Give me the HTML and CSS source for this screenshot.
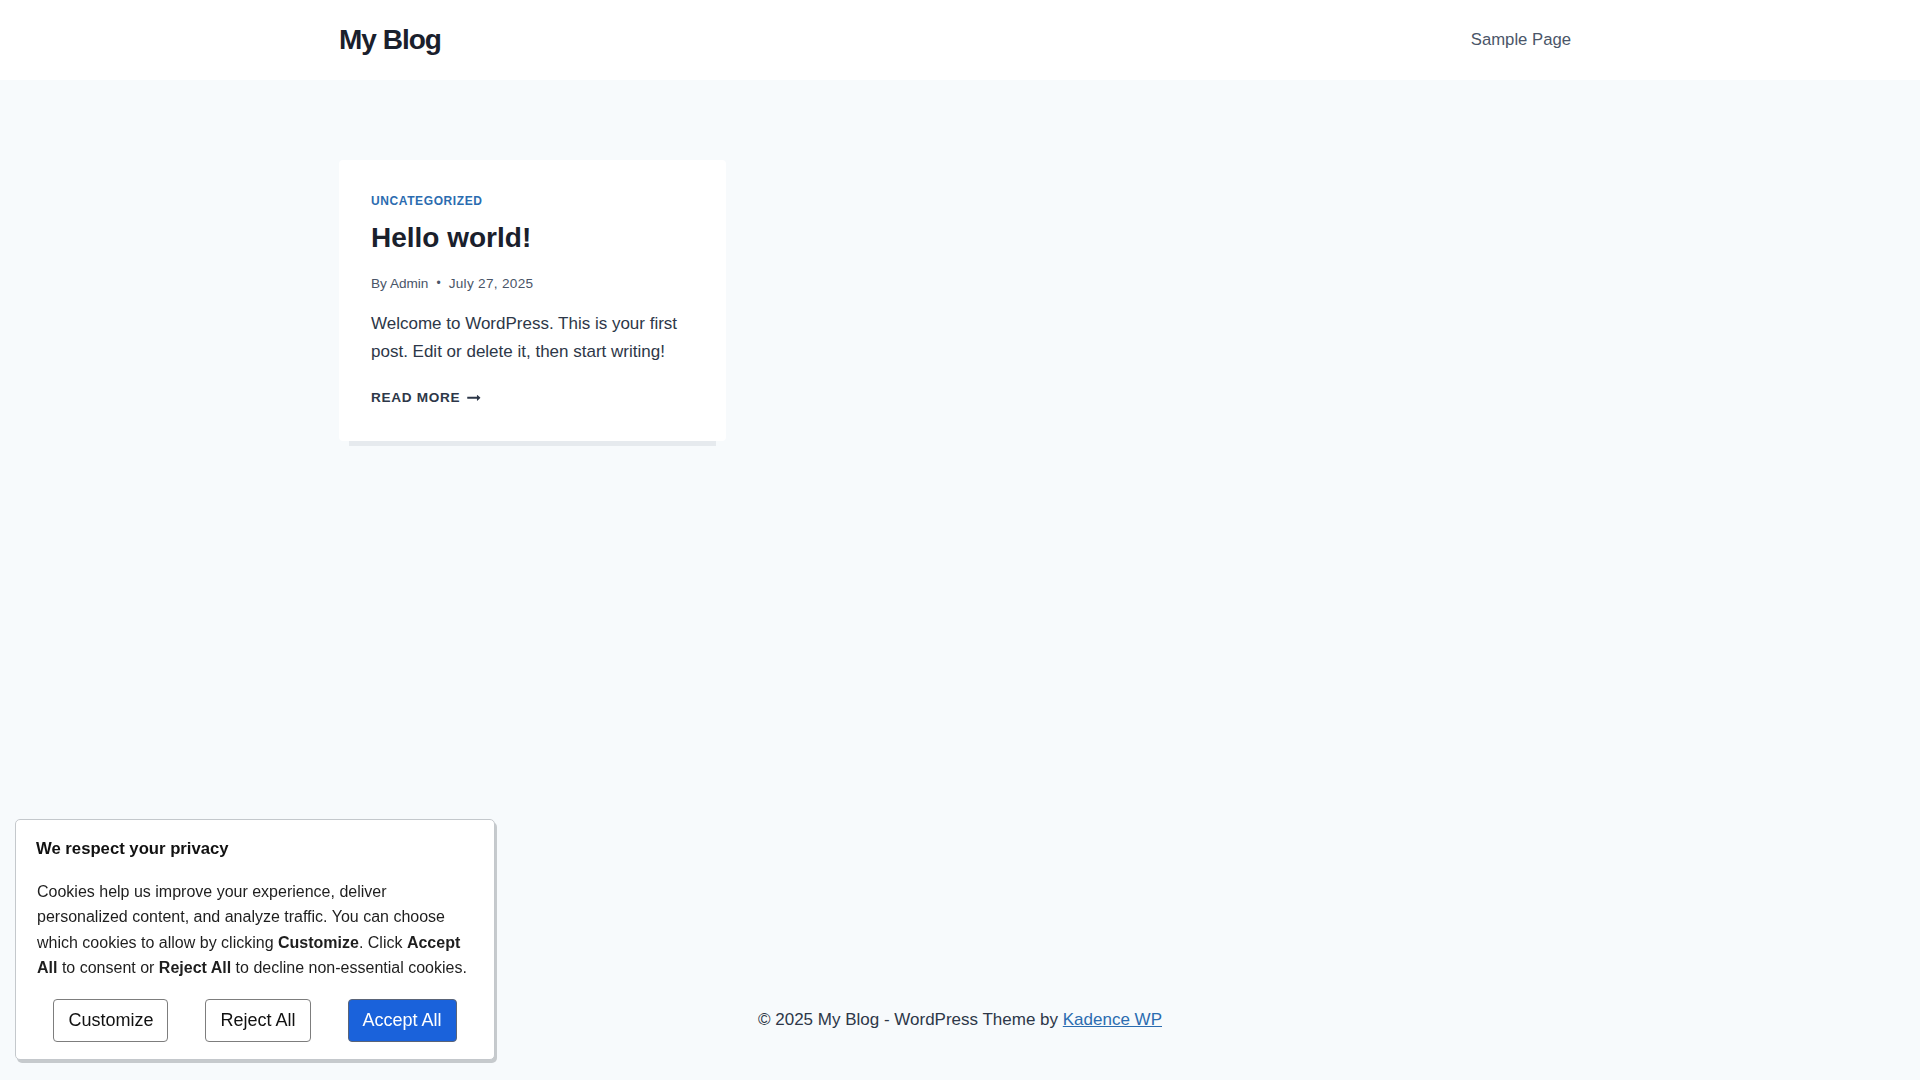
FILE: index.html
```html
<!DOCTYPE html>
<html lang="en">
<head>
<meta charset="utf-8">
<title>My Blog</title>
<link rel="stylesheet" href="styles.css">
</head>
<body>
<header class="site-header">
  <div class="container header-inner">
    <a class="site-title" href="#">My Blog</a>
    <nav class="main-nav">
      <a class="nav-link" href="#">Sample Page</a>
    </nav>
  </div>
</header>
<main class="site-main">
  <div class="container posts-grid">
    <article class="loop-entry">
      <div class="entry-taxonomies"><a href="#">Uncategorized</a></div>
      <h2 class="entry-title">Hello world!</h2>
      <div class="entry-meta">
        <span class="meta-author">By <a href="#">Admin</a></span>
        <span class="meta-divider">&#8226;</span>
        <span class="meta-date">July 27, 2025</span>
      </div>
      <p class="entry-summary">Welcome to WordPress. This is your first post. Edit or delete it, then start writing!</p>
      <div class="more-link-wrap">
        <a class="post-more-link" href="#">Read More<svg class="arrow-icon" viewBox="0 0 27 28" aria-hidden="true"><path d="M27 13.953c0 0.141-0.063 0.281-0.156 0.375l-6 5.531c-0.156 0.141-0.359 0.172-0.547 0.094-0.172-0.078-0.297-0.25-0.297-0.453v-3.5h-19.5c-0.281 0-0.5-0.219-0.5-0.5v-3c0-0.281 0.219-0.5 0.5-0.5h19.5v-3.5c0-0.203 0.109-0.375 0.297-0.453s0.391-0.047 0.547 0.078l6 5.469c0.094 0.094 0.156 0.219 0.156 0.359v0z"/></svg></a>
      </div>
    </article>
  </div>
</main>
<footer class="site-footer">
  <p class="footer-text">&copy; 2025 My Blog - WordPress Theme by <a href="#">Kadence WP</a></p>
</footer>

<div class="cookie-banner">
  <h3 class="cookie-title">We respect your privacy</h3>
  <p class="cookie-text">Cookies help us improve your experience, deliver personalized content, and analyze traffic. You can choose which cookies to allow by clicking <strong>Customize</strong>. Click <strong>Accept All</strong> to consent or <strong>Reject All</strong> to decline non-essential cookies.</p>
  <div class="cookie-buttons">
    <button class="cookie-btn">Customize</button>
    <button class="cookie-btn">Reject All</button>
    <button class="cookie-btn cookie-btn-primary">Accept All</button>
  </div>
</div>
</body>
</html>
```

FILE: styles.css
```css
* {
  box-sizing: border-box;
}

html, body {
  margin: 0;
  padding: 0;
}

body {
  font-family: "Liberation Sans", Arial, sans-serif;
  font-size: 17px;
  line-height: 1.6;
  color: #2d3748;
  background: #f7fafc;
  min-height: 100vh;
  display: flex;
  flex-direction: column;
}

a {
  color: #2b6cb0;
  text-decoration: none;
}

.container {
  width: 100%;
  max-width: 1290px;
  margin: 0 auto;
  padding: 0 24px;
}

/* Header */
.site-header {
  background: #ffffff;
  height: 80px;
}

.header-inner {
  height: 80px;
  display: flex;
  align-items: center;
  justify-content: space-between;
}

.site-title {
  font-size: 28px;
  font-weight: 700;
  letter-spacing: -1px;
  line-height: 1.2;
  color: #1a202c;
}

.main-nav {
  display: flex;
  align-items: center;
}

.nav-link {
  font-size: 16.7px;
  color: #4a5568;
  padding: 10px 10px;
  line-height: 1.2;
}

/* Main */
.site-main {
  flex: 1;
  padding-top: 80px;
}

.posts-grid {
  display: grid;
  grid-template-columns: repeat(3, 1fr);
  column-gap: 40px;
  align-items: start;
}

.loop-entry {
  background: #ffffff;
  border-radius: 4px;
  padding: 32px 32px 31px;
  box-shadow: 0 15px 0 -10px #e6eaee;
}

.entry-taxonomies {
  font-size: 12px;
  line-height: 1.6;
  font-weight: 700;
  letter-spacing: 0.05em;
  text-transform: uppercase;
  margin-bottom: 6px;
}

.entry-taxonomies a {
  color: #2b6cb0;
}

.entry-title {
  margin: 0;
  font-size: 28px;
  line-height: 1.5;
  font-weight: 700;
  color: #1a202c;
}

.entry-meta {
  font-size: 13.6px;
  line-height: 1.6;
  color: #4a5568;
  margin: 13.6px 0 15px;
  display: flex;
  align-items: center;
}

.entry-meta a {
  color: #4a5568;
}

.meta-divider {
  margin: 0 8px;
  font-size: 12px;
}

.meta-date {
  letter-spacing: 0.3px;
}

.entry-summary {
  margin: 0;
  font-size: 17px;
  line-height: 28px;
  color: #2d3748;
}

.more-link-wrap {
  margin-top: 17px;
}

.post-more-link {
  font-size: 13.6px;
  line-height: 1.6;
  font-weight: 700;
  letter-spacing: 0.05em;
  text-transform: uppercase;
  color: #2d3748;
  display: inline-flex;
  align-items: center;
}

.arrow-icon {
  width: 13.6px;
  height: 13.6px;
  margin-left: 6.8px;
  fill: currentColor;
}

/* Footer */
.site-footer {
  padding: 30px 24px 47px;
  text-align: center;
}

.footer-text {
  margin: 0;
  font-size: 17px;
  line-height: 1.6;
  color: #2d3748;
}

.footer-text a {
  color: #2b6cb0;
  text-decoration: underline;
}

/* Cookie banner */
.cookie-banner {
  position: fixed;
  left: 15px;
  bottom: 20px;
  width: 480px;
  background: #ffffff;
  border: 1px solid #c4c8cc;
  border-radius: 5px;
  padding: 15px 21px 17px 21px;
  box-shadow: 2px 3px 0 #c6cacd;
  color: #1e1e1e;
  z-index: 10;
}

.cookie-title {
  margin: 0 0 0 -1px;
  font-size: 16.7px;
  line-height: 27px;
  font-weight: 700;
  color: #111111;
}

.cookie-text {
  margin: 17px 0 0;
  font-size: 16px;
  line-height: 1.6;
  color: #1e1e1e;
}

.cookie-text strong {
  font-weight: 700;
}

.cookie-buttons {
  margin-top: 18px;
  display: flex;
  justify-content: center;
  gap: 37px;
}

.cookie-btn {
  font-family: "Liberation Sans", Arial, sans-serif;
  font-size: 18px;
  line-height: 21px;
  padding: 10px 14px;
  border: 1px solid #7d7d7d;
  border-radius: 4px;
  background: #ffffff;
  color: #111111;
}

.cookie-btn-primary {
  background: #1a62db;
  color: #ffffff;
  border-color: #5a6478;
}
```
